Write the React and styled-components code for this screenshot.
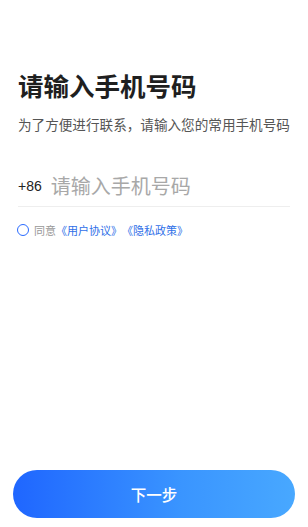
import React, {useState} from 'react';
import styled, {createGlobalStyle} from 'styled-components';

const GlobalStyle = createGlobalStyle`
  html, body {
    margin : 0;
    padding : 0;
    background : #fff;
  }
  body {
    font-family : "Noto Sans CJK SC", "Noto Sans", sans-serif;
  }
`;

const Page = styled.div`
  height : 527px;
  display : flex;
  flex-direction : column;
  box-sizing : border-box;
  padding : 0 18px;
`;

const Title = styled.h1`
  margin : 68px 0 0;
  font-size : 25.5px;
  line-height : 34px;
  font-weight : 700;
  color : #1f1f1f;
`;

const SubTitle = styled.p`
  margin : 12px 0 0;
  font-size : 13.6px;
  line-height : 20px;
  color : #555;
  white-space : nowrap;
`;

const PhoneRow = styled.div`
  margin-top : 31px;
  display : flex;
  align-items : center;
  height : 41px;
  border-bottom : 1px solid #eeeeee;
`;

const Prefix = styled.span`
  font-family : "Liberation Sans", "Noto Sans CJK SC", sans-serif;
  font-size : 14px;
  color : #222;
  margin-right : 9px;
`;

const PhoneInput = styled.input`
  flex : 1;
  min-width : 0;
  border : none;
  outline : none;
  padding : 0;
  font-family : inherit;
  font-size : 20px;
  color : #222;
  background : transparent;
  &::placeholder {
    color : #a8a8a8;
  }
`;

const AgreeRow = styled.label`
  margin-top : 15px;
  display : flex;
  align-items : center;
  font-size : 11px;
  color : #999;
  line-height : 16px;
`;

const Radio = styled.span`
  width : 10px;
  height : 10px;
  border-radius : 50%;
  border : 1.5px solid #2a6bff;
  background : ${props => props.checked ? '#2a6bff' : 'transparent'};
  margin : 0 5px 0 -1px;
`;

const Link = styled.span`
  color : #2f6fe8;
`;

const Spacer = styled.div`
  flex : 1;
`;

const NextButton = styled.button`
  margin : 0 -5px 9px;
  height : 48px;
  border : none;
  border-radius : 24px;
  background : linear-gradient(90deg, #1f66ff 0%, #3a95ff 60%, #48a8ff 100%);
  color : #fff;
  font-family : inherit;
  font-size : 15.5px;
  font-weight : 500;
  cursor : pointer;
`;

const App = () => {
    const [phone, setPhone] = useState('');
    const [agree, setAgree] = useState(false);

    return (
        <>
            <GlobalStyle/>
            <Page>
                <Title>请输入手机号码</Title>
                <SubTitle>为了方便进行联系，请输入您的常用手机号码</SubTitle>
                <PhoneRow>
                    <Prefix>+86</Prefix>
                    <PhoneInput placeholder={"请输入手机号码"} value={phone}
                                onChange={(e) => setPhone(e.target.value)}/>
                </PhoneRow>
                <AgreeRow onClick={() => setAgree(!agree)}>
                    <Radio checked={agree}/>
                    同意<Link>《用户协议》</Link><Link>《隐私政策》</Link>
                </AgreeRow>
                <Spacer/>
                <NextButton>下一步</NextButton>
            </Page>
        </>
    );
};

export default App;
